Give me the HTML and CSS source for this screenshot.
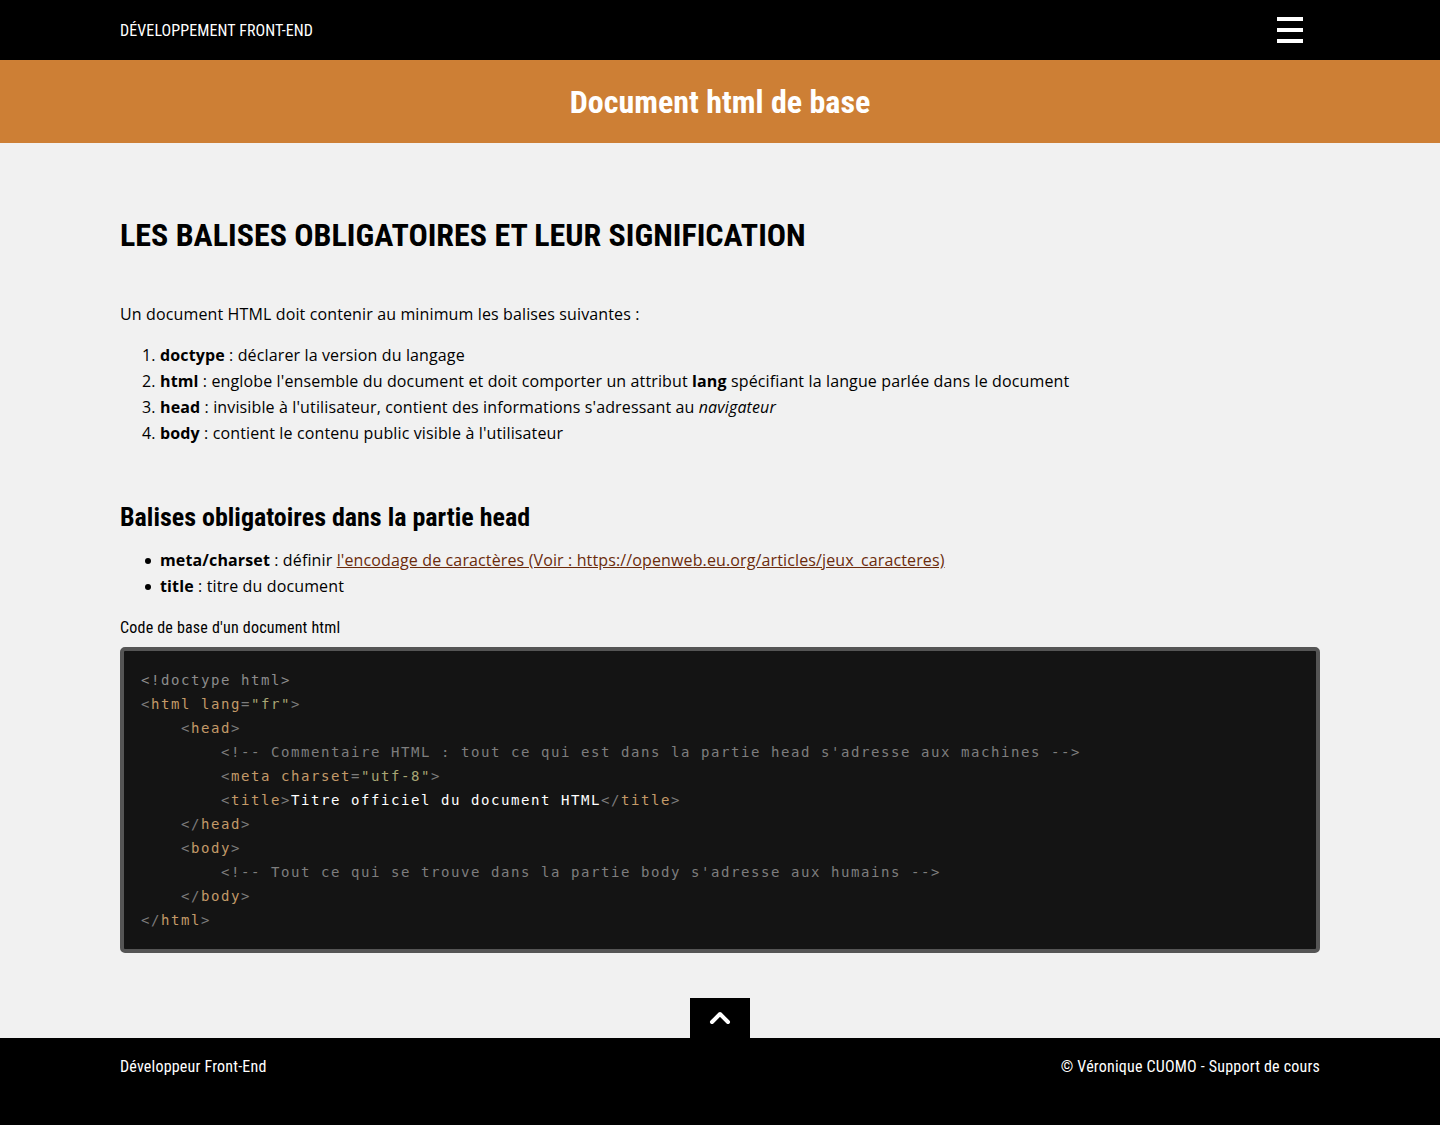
FILE: index.html
```html
<!DOCTYPE html>
<html lang="fr">
<head>
<meta charset="utf-8">
<title>Document html de base</title>
<link rel="stylesheet" href="styles.css">
</head>
<body>
<header class="topbar">
  <div class="container topbar-inner">
    <span class="brand">DÉVELOPPEMENT FRONT-END</span>
    <span class="burger" aria-label="menu"><i></i><i></i><i></i></span>
  </div>
</header>
<div class="banner"><h1 class="banner-title">Document html de base</h1></div>
<main class="container main">
  <h2 class="section-title">LES BALISES OBLIGATOIRES ET LEUR SIGNIFICATION</h2>
  <p class="intro">Un document HTML doit contenir au minimum les balises suivantes :</p>
  <ol class="list">
    <li><b>doctype</b> : déclarer la version du langage</li>
    <li><b>html</b> : englobe l'ensemble du document et doit comporter un attribut <b>lang</b> spécifiant la langue parlée dans le document</li>
    <li><b>head</b> : invisible à l'utilisateur, contient des informations s'adressant au <i>navigateur</i></li>
    <li><b>body</b> : contient le contenu public visible à l'utilisateur</li>
  </ol>
  <h3 class="sub-title">Balises obligatoires dans la partie head</h3>
  <ul class="list bullets">
    <li><b>meta/charset</b> : définir <a href="#">l'encodage de caractères (Voir : https://openweb.eu.org/articles/jeux_caracteres)</a></li>
    <li><b>title</b> : titre du document</li>
  </ul>
  <p class="caption">Code de base d'un document html</p>
  <pre class="code"><span class="c-doc">&lt;!doctype html&gt;</span>
<span class="c-p">&lt;</span><span class="c-t">html</span> <span class="c-a">lang</span><span class="c-p">=</span><span class="c-v">"fr"</span><span class="c-p">&gt;</span>
    <span class="c-p">&lt;</span><span class="c-t">head</span><span class="c-p">&gt;</span>
        <span class="c-c">&lt;!-- Commentaire HTML : tout ce qui est dans la partie head s'adresse aux machines --&gt;</span>
        <span class="c-p">&lt;</span><span class="c-t">meta</span> <span class="c-a">charset</span><span class="c-p">=</span><span class="c-v">"utf-8"</span><span class="c-p">&gt;</span>
        <span class="c-p">&lt;</span><span class="c-t">title</span><span class="c-p">&gt;</span><span class="c-x">Titre officiel du document HTML</span><span class="c-p">&lt;/</span><span class="c-t">title</span><span class="c-p">&gt;</span>
    <span class="c-p">&lt;/</span><span class="c-t">head</span><span class="c-p">&gt;</span>
    <span class="c-p">&lt;</span><span class="c-t">body</span><span class="c-p">&gt;</span>
        <span class="c-c">&lt;!-- Tout ce qui se trouve dans la partie body s'adresse aux humains --&gt;</span>
    <span class="c-p">&lt;/</span><span class="c-t">body</span><span class="c-p">&gt;</span>
<span class="c-p">&lt;/</span><span class="c-t">html</span><span class="c-p">&gt;</span></pre>
</main>
<div class="totop-wrap">
  <a class="totop" href="#" aria-label="Haut de page">
    <svg width="22" height="14" viewBox="0 0 22 14"><path d="M3 11 L11 3 L19 11" fill="none" stroke="#fff" stroke-width="4" stroke-linecap="round" stroke-linejoin="round"/></svg>
  </a>
</div>
<footer class="footer">
  <div class="container footer-inner">
    <span>Développeur Front-End</span>
    <span>© Véronique CUOMO - Support de cours</span>
  </div>
</footer>
</body>
</html>
```
FILE: styles.css
```css
* { box-sizing: border-box; }
html, body { margin: 0; padding: 0; }
body {
  background: #f1f1f1;
  color: #000;
  font-family: "Open Sans", "Liberation Sans", sans-serif;
  font-size: 16px;
}
.container { width: 1200px; margin: 0 auto; }

.topbar { background: #000; height: 60px; }
.topbar-inner { height: 60px; display: flex; align-items: center; justify-content: space-between; }
.brand {
  color: #fff;
  font-family: "Roboto", sans-serif;
  font-stretch: 75%;
  font-size: 16px;
  letter-spacing: 0.1px;
}
.burger { display: flex; flex-direction: column; gap: 7px; margin-right: 17px; }
.burger i { display: block; width: 26px; height: 4px; background: #fff; }

.banner { background: #cd7f35; height: 83px; display: flex; align-items: center; justify-content: center; }
.banner-title {
  margin: 0;
  color: #fff;
  font-family: "Roboto", sans-serif;
  font-stretch: 75%;
  font-weight: 700;
  font-size: 32px;
}

.main { padding-top: 73px; padding-bottom: 45px; }
.section-title {
  margin: 0;
  font-family: "Roboto", sans-serif;
  font-stretch: 75%;
  font-weight: 700;
  font-size: 32px;
  line-height: 38px;
}
.intro { margin: 47px 0 0; line-height: 26px; letter-spacing: 0.13px; }
.list { margin: 15px 0 0; padding-left: 40px; line-height: 26px; letter-spacing: 0.13px; }
.list b { font-weight: 700; }
.sub-title {
  margin: 54px 0 0;
  font-family: "Roboto", sans-serif;
  font-stretch: 75%;
  font-weight: 700;
  font-size: 26px;
  line-height: 34px;
}
.bullets { margin-top: 13px; list-style: none; }
.bullets li { position: relative; }
.bullets li::before {
  content: ""; position: absolute; left: -15px; top: 11px;
  width: 6px; height: 6px; border-radius: 50%; background: #000;
}
.bullets a { color: #6b2b0c; text-decoration: underline; }
.caption {
  margin: 17px 0 0;
  font-family: "Roboto", sans-serif;
  font-stretch: 75%;
  font-size: 16px;
  letter-spacing: 0.2px;
  line-height: 24px;
}
.code {
  margin: 7px 0 0;
  background: #141414;
  border: 4px solid #555;
  border-radius: 5px;
  padding: 17px 17px 17px;
  font-family: "DejaVu Sans Mono", "Liberation Mono", monospace;
  font-size: 14px;
  letter-spacing: 1.57px;
  line-height: 24px;
  color: #999;
  white-space: pre;
  overflow: hidden;
}
.c-doc { color: #8c8c8c; }
.c-p { color: #7c7c7c; }
.c-t { color: #c39a68; }
.c-a { color: #c39a68; }
.c-v { color: #a9a674; }
.c-c { color: #7e7e7e; }
.c-x { color: #fff; }

.totop-wrap { display: flex; justify-content: center; }
.totop { width: 60px; height: 40px; background: #000; display: flex; align-items: center; justify-content: center; }
.footer { background: #000; color: #fff; height: 87px; }
.footer-inner { display: flex; justify-content: space-between; padding-top: 19px; }
.footer-inner span {
  font-family: "Roboto", sans-serif;
  font-stretch: 75%;
  font-size: 16px;
  letter-spacing: 0.2px;
  line-height: 20px;
}
```
